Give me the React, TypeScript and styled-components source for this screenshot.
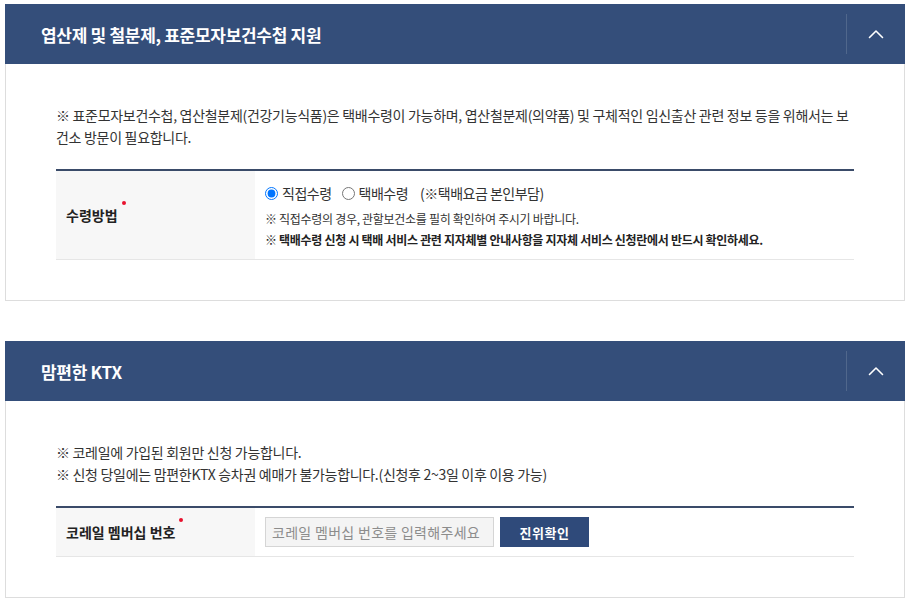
import React from "react";
import styled, { createGlobalStyle } from "styled-components";

const GlobalStyle = createGlobalStyle`
  html, body {
    margin: 0;
    padding: 0;
    background: #ffffff;
  }
  body {
    font-family: "Noto Sans CJK KR", "Noto Sans", sans-serif;
    color: #333333;
  }
  * {
    box-sizing: border-box;
  }
`;

function App() {
  return (
    <>
      <GlobalStyle />
      <Page>
        <Panel>
          <PanelHeader>
            <PanelTitle>엽산제 및 철분제, 표준모자보건수첩 지원</PanelTitle>
            <ToggleButton type="button" aria-label="접기">
              <Chevron />
            </ToggleButton>
          </PanelHeader>
          <PanelBody>
            <Notice>
              ※ 표준모자보건수첩, 엽산철분제(건강기능식품)은 택배수령이 가능하며, 엽산철분제(의약품) 및 구체적인 임신출산 관련 정보 등을 위해서는 보건소 방문이 필요합니다.
            </Notice>
            <FormTable>
              <FormRow>
                <LabelCell>
                  <Required>수령방법</Required>
                </LabelCell>
                <ValueCell $tall>
                  <RadioLine>
                    <RadioLabel>
                      <Radio type="radio" name="receive" defaultChecked />
                      직접수령
                    </RadioLabel>
                    <RadioLabel>
                      <Radio type="radio" name="receive" />
                      택배수령
                    </RadioLabel>
                    <Extra>(※택배요금 본인부담)</Extra>
                  </RadioLine>
                  <Notes>
                    <Note>※ 직접수령의 경우, 관할보건소를 필히 확인하여 주시기 바랍니다.</Note>
                    <Note $strong>
                      ※ 택배수령 신청 시 택배 서비스 관련 지자체별 안내사항을 지자체 서비스 신청란에서 반드시 확인하세요.
                    </Note>
                  </Notes>
                </ValueCell>
              </FormRow>
            </FormTable>
          </PanelBody>
        </Panel>

        <Panel>
          <PanelHeader>
            <PanelTitle>맘편한 KTX</PanelTitle>
            <ToggleButton type="button" aria-label="접기">
              <Chevron />
            </ToggleButton>
          </PanelHeader>
          <PanelBody>
            <Notice>
              ※ 코레일에 가입된 회원만 신청 가능합니다.
              <br />
              ※ 신청 당일에는 맘편한KTX 승차권 예매가 불가능합니다.(신청후 2~3일 이후 이용 가능)
            </Notice>
            <FormTable>
              <FormRow>
                <LabelCell>
                  <Required>코레일 멤버십 번호</Required>
                </LabelCell>
                <ValueCell>
                  <InputGroup>
                    <TextInput placeholder="코레일 멤버십 번호를 입력해주세요" />
                    <ConfirmButton type="button">진위확인</ConfirmButton>
                  </InputGroup>
                </ValueCell>
              </FormRow>
            </FormTable>
          </PanelBody>
        </Panel>
      </Page>
    </>
  );
}

function Chevron() {
  return (
    <svg width="16" height="10" viewBox="0 0 16 10" fill="none">
      <polyline
        points="1.5,8.5 8,2 14.5,8.5"
        stroke="#ffffff"
        strokeWidth="1.6"
        strokeLinecap="round"
        strokeLinejoin="round"
      />
    </svg>
  );
}

export default App;

const Page = styled.div`
  width: 900px;
  margin: 4px 0 0 5px;
  display: flex;
  flex-direction: column;
  gap: 40px;
`;

const Panel = styled.section`
  display: flex;
  flex-direction: column;
`;

const PanelHeader = styled.div`
  height: 60px;
  background: #344e7a;
  display: flex;
  align-items: center;
  justify-content: space-between;
  padding-left: 36px;
`;

const PanelTitle = styled.h2`
  margin: 0;
  color: #ffffff;
  font-size: 17px;
  font-weight: 700;
  letter-spacing: -0.3px;
`;

const ToggleButton = styled.button`
  width: 59px;
  height: 40px;
  border: none;
  border-left: 1px solid rgba(255, 255, 255, 0.14);
  background: transparent;
  display: flex;
  align-items: center;
  justify-content: center;
  padding: 0;
  cursor: pointer;
`;

const PanelBody = styled.div`
  border: 1px solid #dddddd;
  border-top: none;
  padding: 40px 50px 40px 50px;
`;

const Notice = styled.p`
  margin: 0 0 21px;
  font-size: 14px;
  line-height: 22px;
  letter-spacing: -0.3px;
  color: #333333;
`;

const FormTable = styled.div`
  border-top: 2px solid #3a4b69;
`;

const FormRow = styled.div`
  display: grid;
  grid-template-columns: 199px 1fr;
  border-bottom: 1px solid #e6e6e6;
`;

const LabelCell = styled.div`
  background: #f7f7f7;
  display: flex;
  align-items: center;
  padding: 0 10px;
  font-size: 14px;
  font-weight: 700;
  letter-spacing: 0;
  color: #222222;
`;

const Required = styled.span`
  position: relative;
  padding-right: 8px;

  &::after {
    content: "";
    position: absolute;
    right: 0;
    top: -4px;
    width: 4px;
    height: 4px;
    border-radius: 50%;
    background: #e8112d;
  }
`;

const ValueCell = styled.div<{ $tall?: boolean }>`
  padding: ${(p) => (p.$tall ? "11px 10px 9px" : "9px 10px 9px")};
  display: flex;
  flex-direction: column;
`;

const RadioLine = styled.div`
  display: flex;
  align-items: center;
  height: 22px;
  font-size: 14px;
  letter-spacing: -0.5px;
  color: #333333;
`;

const RadioLabel = styled.label`
  display: inline-flex;
  align-items: center;
  margin-right: 10px;
  cursor: pointer;
`;

const Radio = styled.input`
  margin: 0 4px 0 0;
  width: 13px;
  height: 13px;
`;

const Extra = styled.span`
  margin-left: 2px;
`;

const Notes = styled.div`
  margin-top: 4px;
`;

const Note = styled.p<{ $strong?: boolean }>`
  margin: 0;
  font-size: 12px;
  line-height: 21px;
  letter-spacing: -0.3px;
  font-weight: ${(p) => (p.$strong ? 700 : 400)};
  color: ${(p) => (p.$strong ? "#222222" : "#333333")};
`;

const InputGroup = styled.div`
  display: flex;
  gap: 6px;
`;

const TextInput = styled.input`
  width: 229px;
  height: 30px;
  border: 1px solid #d5d5d5;
  background: #f4f4f4;
  padding: 0 6px;
  font-family: "Noto Sans CJK KR", "Noto Sans", sans-serif;
  font-size: 14px;
  letter-spacing: 0.3px;
  color: #333333;

  &::placeholder {
    color: #8c8c8c;
  }
`;

const ConfirmButton = styled.button`
  width: 89px;
  height: 30px;
  border: none;
  background: #2f4a7a;
  color: #ffffff;
  font-family: "Noto Sans CJK KR", "Noto Sans", sans-serif;
  font-size: 13px;
  font-weight: 700;
  letter-spacing: 0.5px;
  cursor: pointer;
`;
